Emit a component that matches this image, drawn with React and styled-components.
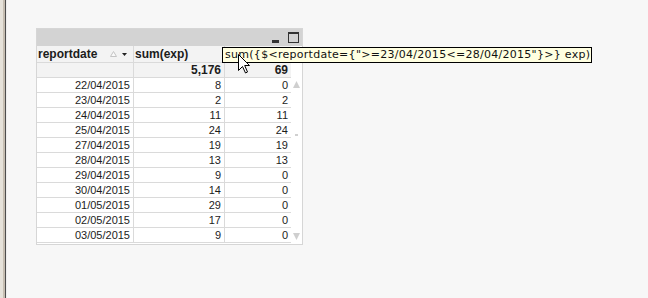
import { Fragment } from 'react'
import styled, { createGlobalStyle } from 'styled-components'

const GlobalStyle = createGlobalStyle`
  html, body {
    margin: 0;
    padding: 0;
    background: #f7f7f7;
    overflow: hidden;
  }
`

const rows = [
  ['22/04/2015', 8, 0],
  ['23/04/2015', 2, 2],
  ['24/04/2015', 11, 11],
  ['25/04/2015', 24, 24],
  ['27/04/2015', 19, 19],
  ['28/04/2015', 13, 13],
  ['29/04/2015', 9, 0],
  ['30/04/2015', 14, 0],
  ['01/05/2015', 29, 0],
  ['02/05/2015', 17, 0],
  ['03/05/2015', 9, 0],
]

const Page = styled.div`
  display: flex;
  height: 298px;
  background: #f7f7f7;
  font-family: "Liberation Sans", Arial, sans-serif;
`

const LeftEdge = styled.div`
  width: 7px;
  flex: none;
  background: linear-gradient(to right, #e6e2da 0 3px, #c6beb2 3px 5px, #4d4d4d 5px 6px, #ededed 6px 7px);
`

const Stage = styled.div`
  flex: 1;
  padding: 28px 0 0 29px;
`

const Panel = styled.div`
  position: relative;
  width: 265px;
  border: 1px solid #d6d6d6;
  background: #fff;
`

const Caption = styled.div`
  height: 17px;
  background: #d3d3d3;
  display: flex;
  justify-content: flex-end;
  align-items: center;
  gap: 9px;
  padding-right: 3px;
`

const Body = styled.div`
  display: flex;
`

const Grid = styled.div`
  display: grid;
  grid-template-columns: 97px 91px 66px;
`

const Cell = styled.div`
  box-sizing: border-box;
  height: ${p => p.$h || 15}px;
  border-bottom: 1px solid #dadada;
  border-right: ${p => (p.$last ? 'none' : '1px solid #dadada')};
  background: ${p => (p.$head ? '#f3f3f3' : '#fff')};
  color: #1c1c1c;
  font-size: ${p => (p.$bold ? 12 : 11)}px;
  font-weight: ${p => (p.$bold ? 700 : 400)};
  line-height: ${p => (p.$h || 15) - 1}px;
  padding: ${p => (p.$left ? '0 0 0 1px' : '0 3px 0 0')};
  white-space: nowrap;
  display: flex;
  align-items: center;
  justify-content: ${p => (p.$left ? 'flex-start' : 'flex-end')};
`

const HeadLabel = styled.span`
  flex: 1;
`

const SortIcons = styled.span`
  display: flex;
  align-items: center;
  gap: 5px;
  margin-right: 6px;
`

const ScrollTrack = styled.div`
  width: 11px;
  display: flex;
  flex-direction: column;
  align-items: center;
  padding-top: 35px;
  box-sizing: border-box;
  background: #fff;
`

const Thumb = styled.div`
  width: 3px;
  height: 2px;
  background: #d0d0d0;
  margin: 46px 0 97px;
`

const Footer = styled.div`
  height: 1px;
  background: #fff;
`

const Tooltip = styled.div`
  position: absolute;
  left: 185px;
  top: 18px;
  height: 14px;
  padding: 0 1px 0 2px;
  border: 1px solid #000;
  background: #ffffe1;
  color: #111;
  font-family: "DejaVu Sans", Tahoma, sans-serif;
  font-size: 11px;
  letter-spacing: 0.28px;
  line-height: 14px;
  white-space: nowrap;
  z-index: 2;
`

const Cursor = styled.svg`
  position: absolute;
  left: 201px;
  top: 25px;
  z-index: 3;
`

function App() {
  return (
    <Page>
      <GlobalStyle />
      <LeftEdge />
      <Stage>
        <Panel>
          <Caption>
            <svg width="7" height="10" viewBox="0 0 7 10">
              <rect x="0" y="7" width="7" height="3" fill="#333" />
            </svg>
            <svg width="11" height="11" viewBox="0 0 11 11">
              <rect x="0.5" y="0.5" width="10" height="10" fill="none" stroke="#333" />
              <rect x="0" y="0" width="11" height="2" fill="#333" />
            </svg>
          </Caption>
          <Body>
            <Grid>
              <Cell $head $bold $left $h={17}>
                <HeadLabel>reportdate</HeadLabel>
                <SortIcons>
                  <svg width="7" height="6" viewBox="0 0 7 6">
                    <path d="M3.5 0.5 L6.5 5.5 L0.5 5.5 Z" fill="#fafafa" stroke="#c4c4c4" />
                  </svg>
                  <svg width="5" height="3" viewBox="0 0 5 3">
                    <path d="M0 0 L5 0 L2.5 3 Z" fill="#222" />
                  </svg>
                </SortIcons>
              </Cell>
              <Cell $head $bold $left $h={17}>sum(exp)</Cell>
              <Cell $head $bold $left $last $h={17}></Cell>

              <Cell $head $h={15}></Cell>
              <Cell $head $bold $h={15}>5,176</Cell>
              <Cell $head $bold $last $h={15}>69</Cell>

              {rows.map(([d, a, b]) => (
                <Fragment key={d}>
                  <Cell>{d}</Cell>
                  <Cell>{a}</Cell>
                  <Cell $last>{b}</Cell>
                </Fragment>
              ))}
            </Grid>
            <ScrollTrack>
              <svg width="7" height="7" viewBox="0 0 7 7">
                <path d="M3.5 0 L7 7 L0 7 Z" fill="#cfcfcf" />
              </svg>
              <Thumb />
              <svg width="7" height="7" viewBox="0 0 7 7">
                <path d="M0 0 L7 0 L3.5 7 Z" fill="#cfcfcf" />
              </svg>
            </ScrollTrack>
          </Body>
          <Footer />
          <Tooltip>sum({'{'}$&lt;reportdate={'{'}"&gt;=23/04/2015&lt;=28/04/2015"{'}'}&gt;{'}'} exp)</Tooltip>
          <Cursor width="12" height="20" viewBox="0 0 12 20">
            <path d="M0.5 0.5 L0.5 16.5 L4.5 12.5 L7.5 19 L9.5 18 L6.7 11.5 L11.5 11.5 Z" fill="#fff" stroke="#000" strokeWidth="1" />
          </Cursor>
        </Panel>
      </Stage>
    </Page>
  )
}

export default App
